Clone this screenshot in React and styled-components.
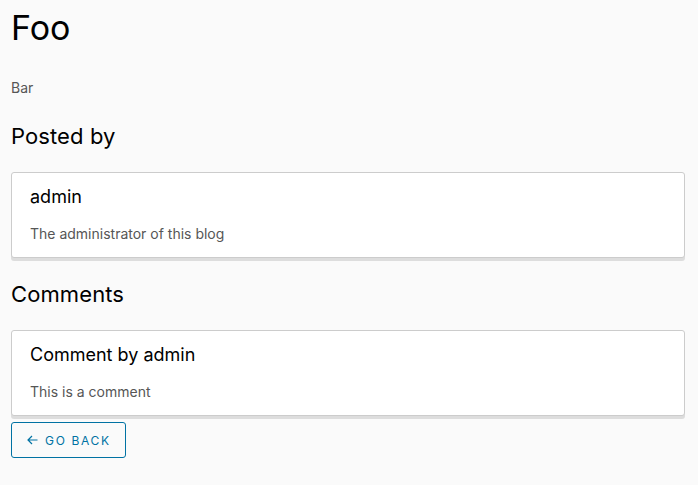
import React from "react";
import styled, { createGlobalStyle } from "styled-components";

const GlobalStyle = createGlobalStyle`
  html, body {
    margin: 0;
    padding: 0;
    background: #fafafa;
    font-family: "Inter", "Noto Sans", sans-serif;
  }
`;

const Page = styled.main`
  padding: 7px 13px 24px 11px;
  display: flex;
  flex-direction: column;
  align-items: stretch;
`;

const Title = styled.h1`
  margin: 0;
  font-size: 34px;
  line-height: 42px;
  font-weight: 400;
  color: #000;
  letter-spacing: 0;
`;

const Lead = styled.p`
  margin: 29px 0 0;
  font-size: 14px;
  line-height: 20px;
  color: #565656;
`;

const Section = styled.h3`
  margin: ${(p) => p.$top || 24}px 0 0;
  font-size: 22px;
  line-height: 28px;
  font-weight: 400;
  color: #000;
  letter-spacing: 0.1px;
`;

const Card = styled.div`
  margin-top: 22px;
  background: #fff;
  border: 1px solid #ccc;
  border-radius: 3px;
  box-shadow: 0 3px 0 0 #ddd;
  padding: 12px 18px 13px;
`;

const CardTitle = styled.h4`
  margin: 0;
  font-size: 18px;
  line-height: 24px;
  font-weight: 400;
  color: #000;
`;

const CardText = styled.p`
  margin: 15px 0 0;
  font-size: 14px;
  line-height: 20px;
  color: #565656;
`;

const BackButton = styled.button`
  align-self: flex-start;
  margin-top: 6px;
  height: 36px;
  padding: 0 14px 0 15px;
  display: inline-flex;
  align-items: center;
  gap: 7px;
  background: transparent;
  border: 1px solid #0072a3;
  border-radius: 3px;
  color: #0072a3;
  font-family: inherit;
  font-size: 12px;
  font-weight: 400;
  letter-spacing: 0.14em;
  text-transform: uppercase;
  cursor: pointer;
`;

const Arrow = () => (
  <svg width="11" height="10" viewBox="0 0 11 10" fill="none" stroke="#0072a3" strokeWidth="1.2">
    <path d="M10.5 5H1M5 1L1 5l4 4" />
  </svg>
);

export default function App() {
  return (
    <>
      <GlobalStyle />
      <Page>
        <Title>Foo</Title>
        <Lead>Bar</Lead>
        <Section>Posted by</Section>
        <Card>
          <CardTitle>admin</CardTitle>
          <CardText>The administrator of this blog</CardText>
        </Card>
        <Section $top={22}>Comments</Section>
        <Card>
          <CardTitle>Comment by admin</CardTitle>
          <CardText>This is a comment</CardText>
        </Card>
        <BackButton>
          <Arrow />
          Go back
        </BackButton>
      </Page>
    </>
  );
}
